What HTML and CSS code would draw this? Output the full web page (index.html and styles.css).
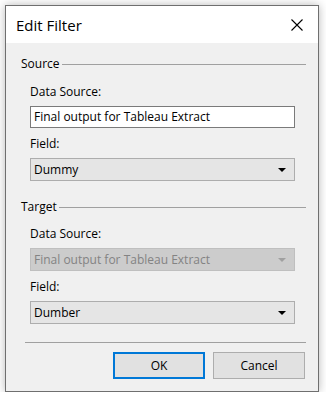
FILE: index.html
```html
<!DOCTYPE html>
<html>
<head>
    <title>Edit Filter</title>
    <link rel="stylesheet" href="styles.css">
</head>
<body>
    <div class="dialog">
        <div class="titlebar">
            <span class="title">Edit Filter</span>
            <svg class="close" width="12" height="12" viewBox="0 0 12 12">
                <path d="M0.5 0.5 L11.5 11.5 M11.5 0.5 L0.5 11.5" stroke="#000" stroke-width="1.1" fill="none"/>
            </svg>
        </div>

        <div class="content">
            <div class="group-head">
                <span>Source</span>
                <div class="rule"></div>
            </div>
            <div class="group">
                <div class="label">Data Source:</div>
                <div class="textbox">Final output for Tableau Extract</div>
                <div class="label field-label">Field:</div>
                <div class="combo">
                    <span>Dummy</span>
                    <span class="arrow"></span>
                </div>
            </div>

            <div class="group-head target-head">
                <span>Target</span>
                <div class="rule"></div>
            </div>
            <div class="group">
                <div class="label target-label">Data Source:</div>
                <div class="combo disabled">
                    <span>Final output for Tableau Extract</span>
                    <span class="arrow"></span>
                </div>
                <div class="label field-label">Field:</div>
                <div class="combo">
                    <span>Dumber</span>
                    <span class="arrow"></span>
                </div>
            </div>

            <div class="separator"></div>

            <div class="buttons">
                <button class="btn default">OK</button>
                <button class="btn">Cancel</button>
            </div>
        </div>
    </div>
</body>
</html>
```

FILE: styles.css
```css
body {
    margin: 0;
    background: #fff;
    font-family: "Open Sans", "Noto Sans", Arial, sans-serif;
    font-size: 12px;
    color: #000;
}
.dialog {
    margin: 5px 0 0 5px;
    width: 312px;
    height: 385px;
    border: 1px solid #6f6f6f;
    background: #f0f0f0;
    box-shadow: 0 0 9px rgba(0, 0, 0, 0.28);
    display: flex;
    flex-direction: column;
}
.titlebar {
    height: 37px;
    background: #fff;
    display: flex;
    align-items: center;
    justify-content: space-between;
    padding: 0 15px 0 10px;
}
.title {
    font-size: 15px;
}
.content {
    padding: 13px 12px 0 15px;
}
.group-head {
    display: flex;
    align-items: center;
    height: 16px;
    line-height: 16px;
}
.group-head .rule {
    flex: 1;
    height: 1px;
    background: #a0a0a0;
    margin-left: 2px;
}
.target-head {
    margin-top: 18px;
}
.group {
    padding-left: 9px;
    width: 265px;
}
.label {
    height: 16px;
    line-height: 16px;
    margin-top: 12px;
    margin-bottom: 6px;
}
.target-label {
    margin-top: 11px;
}
.field-label {
    margin-top: 8px;
}
.textbox {
    height: 20px;
    line-height: 20px;
    border: 1px solid #7a7a7a;
    background: #fff;
    padding-left: 3px;
}
.combo {
    height: 21px;
    line-height: 21px;
    border: 1px solid #adadad;
    background: #e5e5e5;
    padding: 0 8px 0 3px;
    display: flex;
    align-items: center;
    justify-content: space-between;
}
.combo .arrow {
    width: 0;
    height: 0;
    border-left: 4px solid transparent;
    border-right: 4px solid transparent;
    border-top: 4px solid #000;
}
.combo.disabled {
    background: #cccccc;
    border-color: #bfbfbf;
    color: #838383;
}
.combo.disabled .arrow {
    border-top-color: #a0a0a0;
}
.separator {
    height: 1px;
    background: #a0a0a0;
    margin: 18px 0 0 4px;
}
.buttons {
    display: flex;
    justify-content: flex-end;
    gap: 8px;
    margin-top: 9px;
    padding-right: 1px;
}
.btn {
    width: 92px;
    height: 27px;
    border: 1px solid #adadad;
    background: #e1e1e1;
    font-family: inherit;
    font-size: 12px;
    color: #000;
    padding: 0;
}
.btn.default {
    border: 2px solid #0078d7;
}
```
